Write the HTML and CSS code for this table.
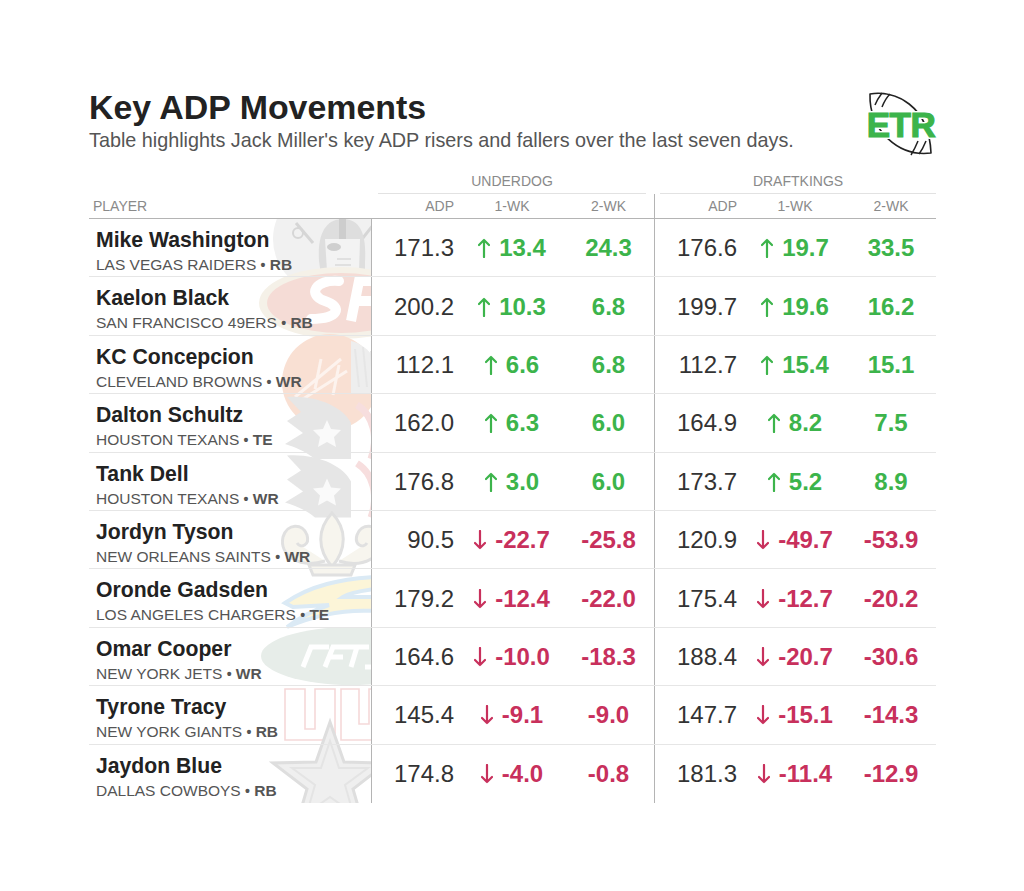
FILE: index.html
```html
<!DOCTYPE html>
<html lang="en">
<head>
<meta charset="utf-8">
<title>Key ADP Movements</title>
<link rel="stylesheet" href="styles.css">
</head>
<body>
<div class="page">
  <header class="head">
    <div class="head-text">
      <h1 class="title">Key ADP Movements</h1>
      <p class="sub">Table highlights Jack Miller's key ADP risers and fallers over the last seven days.</p>
    </div>
    <svg class="logo" viewBox="0 0 72 68" aria-label="ETR">
      <path d="M5 3 C 30 -1, 64 14, 66 62 C 34 66, 4 40, 5 3 Z" fill="none" stroke="#222" stroke-width="1.6" stroke-linejoin="round"/>
      <path d="M17 2 C 14 6, 12 9, 10 14" fill="none" stroke="#222" stroke-width="1.5"/>
      <path d="M25 3 C 21 7, 19 11, 17 16" fill="none" stroke="#222" stroke-width="1.5"/>
      <path d="M53 50 C 51 55, 49 59, 46 64" fill="none" stroke="#222" stroke-width="1.5"/>
      <path d="M61 50 C 59 55, 57 59, 54 63" fill="none" stroke="#222" stroke-width="1.5"/>
      <text x="36" y="46" text-anchor="middle" class="logo-halo">ETR</text>
      <text x="36" y="46" text-anchor="middle" class="logo-text">ETR</text>
    </svg>
  </header>

  <div class="table">
    <div class="groups">
      <div class="g-empty"></div>
      <div class="group ud">UNDERDOG</div>
      <div class="group dk">DRAFTKINGS</div>
    </div>
    <div class="cols">
      <div class="c-player">PLAYER</div>
      <div class="c-adp">ADP</div>
      <div class="c-wk">1-WK</div>
      <div class="c-wk2">2-WK</div>
      <div class="c-adp sep">ADP</div>
      <div class="c-wk">1-WK</div>
      <div class="c-wk2">2-WK</div>
    </div>

    <div class="body">
      <svg class="wm" viewBox="0 0 282 585" aria-hidden="true">
        <!-- Raiders -->
        <circle cx="238" cy="20" r="54" fill="#f1f1f1"/>
        <line x1="207" y1="4" x2="224" y2="24" stroke="#d6d6d6" stroke-width="3"/>
        <circle cx="209" cy="14" r="5" fill="none" stroke="#d6d6d6" stroke-width="2"/>
        <line x1="284" y1="6" x2="270" y2="24" stroke="#d6d6d6" stroke-width="3"/>
        <path d="M230 42 C 228 10, 240 0, 254 0 C 268 0, 278 10, 276 42 L 276 56 L 232 56 Z" fill="#dedede"/>
        <path d="M236 20 L 271 20 L 270 52 L 238 52 Z" fill="#f3f3f3"/>
        <rect x="250" y="0" width="7" height="20" fill="#cdcdcd"/>
        <ellipse cx="245" cy="28" rx="7" ry="4" fill="#cfcfcf"/>
        <path d="M248 40 L 262 40 M 246 46 L 262 46" stroke="#dadada" stroke-width="1.5"/>

        <!-- 49ers -->
        <ellipse cx="252" cy="84" rx="82" ry="36" fill="#f5f1e8"/>
        <ellipse cx="252" cy="84" rx="74" ry="30" fill="#f5dcd6"/>
        <path d="M250 62 C 226 60, 218 76, 236 82 C 254 88, 250 100, 222 100" fill="none" stroke="#ffffff" stroke-width="10" stroke-linecap="round"/>
        <path d="M262 102 L 270 62 L 292 62 M 266 82 L 288 82" fill="none" stroke="#ffffff" stroke-width="10"/>

        <!-- Browns -->
        <circle cx="241" cy="163" r="48" fill="#f9e0d3"/>
        <path d="M262 122 C 275 125, 285 135, 290 150 L 290 175 L 262 175 Z" fill="#eeeeee"/>
        <path d="M206 178 L 252 140 M 214 180 L 258 152 M 226 170 L 232 140 M 244 176 L 250 146" stroke="#fdf3ee" stroke-width="3" fill="none"/>
        <path d="M266 130 L 270 168 M 274 128 L 278 168 M 282 132 L 284 168" stroke="#e6e6e6" stroke-width="2"/>

        <!-- Texans 1 -->
        <g>
          <path d="M198 178 C 228 176, 254 188, 262 204 L 262 240 L 226 240 C 216 232, 206 228, 196 225 L 214 214 L 198 202 L 212 193 Z" fill="#e6e6e6"/>
          <path d="M238 201 L 242 210 L 252 211 L 245 218 L 247 228 L 238 223 L 229 228 L 231 218 L 224 211 L 234 210 Z" fill="#fafafa"/>
          <path d="M268 186 C 284 196, 290 218, 282 240" stroke="#f7dede" stroke-width="7" fill="none"/>
        </g>
        <!-- Texans 2 -->
        <g transform="translate(0 58.4)">
          <path d="M198 178 C 228 176, 254 188, 262 204 L 262 240 L 226 240 C 216 232, 206 228, 196 225 L 214 214 L 198 202 L 212 193 Z" fill="#e6e6e6"/>
          <path d="M238 201 L 242 210 L 252 211 L 245 218 L 247 228 L 238 223 L 229 228 L 231 218 L 224 211 L 234 210 Z" fill="#fafafa"/>
          <path d="M268 186 C 284 196, 290 218, 282 240" stroke="#f7dede" stroke-width="7" fill="none"/>
        </g>

        <!-- Saints -->
        <g fill="#f7f5ee" stroke="#e0e0e0" stroke-width="3">
          <path d="M243 294 C 228 310, 228 330, 243 348 C 258 330, 258 310, 243 294 Z"/>
          <path d="M236 342 C 210 350, 190 336, 194 318 C 198 304, 214 304, 218 316 C 221 326, 212 330, 208 324"/>
          <path d="M250 342 C 276 350, 296 336, 292 318 C 288 304, 272 304, 268 316 C 265 326, 274 330, 278 324"/>
          <path d="M220 346 L 266 346 L 262 356 L 224 356 Z"/>
        </g>

        <!-- Chargers -->
        <path d="M196 384 C 222 366, 252 360, 286 358 L 286 370 C 270 372, 260 374, 254 378 L 286 378 L 286 392 C 254 390, 226 396, 198 408 C 214 396, 228 390, 240 386 L 204 388 Z" fill="#fcf5d8" stroke="#dbeaf5" stroke-width="4"/>

        <!-- Jets -->
        <ellipse cx="262" cy="437" rx="90" ry="29" fill="#e7ede9"/>
        <path d="M214 448 L 222 428 L 240 428 M 236 448 L 244 428 L 258 428 M 240 438 L 254 438 M 262 448 L 268 428 M 256 428 L 280 428 M 276 448 L 290 448" fill="none" stroke="#ffffff" stroke-width="5"/>

        <!-- Giants -->
        <g fill="none" stroke="#f5d9d9" stroke-width="1.6">
          <path d="M196 521 V 470 H 216 V 510 H 226 V 470 H 246 V 521 Z"/>
          <path d="M252 470 H 270 V 505 H 280 V 470 H 300 V 521 H 252 Z"/>
        </g>

        <!-- Cowboys -->
        <path d="M241 503 L 255 543 L 298 544 L 264 570 L 276 611 L 241 587 L 206 611 L 218 570 L 184 544 L 227 543 Z" fill="#efefef" stroke="#dedede" stroke-width="3"/>
        <path d="M241 522 L 250 549 L 279 549 L 256 566 L 264 594 L 241 578 L 218 594 L 226 566 L 203 549 L 232 549 Z" fill="none" stroke="#e4e4e4" stroke-width="2"/>
      </svg>

      <div class="row">
        <div class="player"><div class="name">Mike Washington</div><div class="team">LAS VEGAS RAIDERS <span class="dot">•</span> <b>RB</b></div></div>
        <div class="adp sep">171.3</div>
        <div class="wk up"><svg class="arr" viewBox="0 0 12 20"><path d="M6 19 V2 M1 7 L6 2 L11 7"/></svg><span>13.4</span></div>
        <div class="wk2 up">24.3</div>
        <div class="adp sep">176.6</div>
        <div class="wk up"><svg class="arr" viewBox="0 0 12 20"><path d="M6 19 V2 M1 7 L6 2 L11 7"/></svg><span>19.7</span></div>
        <div class="wk2 up">33.5</div>
      </div>
      <div class="row">
        <div class="player"><div class="name">Kaelon Black</div><div class="team">SAN FRANCISCO 49ERS <span class="dot">•</span> <b>RB</b></div></div>
        <div class="adp sep">200.2</div>
        <div class="wk up"><svg class="arr" viewBox="0 0 12 20"><path d="M6 19 V2 M1 7 L6 2 L11 7"/></svg><span>10.3</span></div>
        <div class="wk2 up">6.8</div>
        <div class="adp sep">199.7</div>
        <div class="wk up"><svg class="arr" viewBox="0 0 12 20"><path d="M6 19 V2 M1 7 L6 2 L11 7"/></svg><span>19.6</span></div>
        <div class="wk2 up">16.2</div>
      </div>
      <div class="row">
        <div class="player"><div class="name">KC Concepcion</div><div class="team">CLEVELAND BROWNS <span class="dot">•</span> <b>WR</b></div></div>
        <div class="adp sep">112.1</div>
        <div class="wk up"><svg class="arr" viewBox="0 0 12 20"><path d="M6 19 V2 M1 7 L6 2 L11 7"/></svg><span>6.6</span></div>
        <div class="wk2 up">6.8</div>
        <div class="adp sep">112.7</div>
        <div class="wk up"><svg class="arr" viewBox="0 0 12 20"><path d="M6 19 V2 M1 7 L6 2 L11 7"/></svg><span>15.4</span></div>
        <div class="wk2 up">15.1</div>
      </div>
      <div class="row">
        <div class="player"><div class="name">Dalton Schultz</div><div class="team">HOUSTON TEXANS <span class="dot">•</span> <b>TE</b></div></div>
        <div class="adp sep">162.0</div>
        <div class="wk up"><svg class="arr" viewBox="0 0 12 20"><path d="M6 19 V2 M1 7 L6 2 L11 7"/></svg><span>6.3</span></div>
        <div class="wk2 up">6.0</div>
        <div class="adp sep">164.9</div>
        <div class="wk up"><svg class="arr" viewBox="0 0 12 20"><path d="M6 19 V2 M1 7 L6 2 L11 7"/></svg><span>8.2</span></div>
        <div class="wk2 up">7.5</div>
      </div>
      <div class="row">
        <div class="player"><div class="name">Tank Dell</div><div class="team">HOUSTON TEXANS <span class="dot">•</span> <b>WR</b></div></div>
        <div class="adp sep">176.8</div>
        <div class="wk up"><svg class="arr" viewBox="0 0 12 20"><path d="M6 19 V2 M1 7 L6 2 L11 7"/></svg><span>3.0</span></div>
        <div class="wk2 up">6.0</div>
        <div class="adp sep">173.7</div>
        <div class="wk up"><svg class="arr" viewBox="0 0 12 20"><path d="M6 19 V2 M1 7 L6 2 L11 7"/></svg><span>5.2</span></div>
        <div class="wk2 up">8.9</div>
      </div>
      <div class="row">
        <div class="player"><div class="name">Jordyn Tyson</div><div class="team">NEW ORLEANS SAINTS <span class="dot">•</span> <b>WR</b></div></div>
        <div class="adp sep">90.5</div>
        <div class="wk down"><svg class="arr" viewBox="0 0 12 20"><path d="M6 1 V18 M1 13 L6 18 L11 13"/></svg><span>-22.7</span></div>
        <div class="wk2 down">-25.8</div>
        <div class="adp sep">120.9</div>
        <div class="wk down"><svg class="arr" viewBox="0 0 12 20"><path d="M6 1 V18 M1 13 L6 18 L11 13"/></svg><span>-49.7</span></div>
        <div class="wk2 down">-53.9</div>
      </div>
      <div class="row">
        <div class="player"><div class="name">Oronde Gadsden</div><div class="team">LOS ANGELES CHARGERS <span class="dot">•</span> <b>TE</b></div></div>
        <div class="adp sep">179.2</div>
        <div class="wk down"><svg class="arr" viewBox="0 0 12 20"><path d="M6 1 V18 M1 13 L6 18 L11 13"/></svg><span>-12.4</span></div>
        <div class="wk2 down">-22.0</div>
        <div class="adp sep">175.4</div>
        <div class="wk down"><svg class="arr" viewBox="0 0 12 20"><path d="M6 1 V18 M1 13 L6 18 L11 13"/></svg><span>-12.7</span></div>
        <div class="wk2 down">-20.2</div>
      </div>
      <div class="row">
        <div class="player"><div class="name">Omar Cooper</div><div class="team">NEW YORK JETS <span class="dot">•</span> <b>WR</b></div></div>
        <div class="adp sep">164.6</div>
        <div class="wk down"><svg class="arr" viewBox="0 0 12 20"><path d="M6 1 V18 M1 13 L6 18 L11 13"/></svg><span>-10.0</span></div>
        <div class="wk2 down">-18.3</div>
        <div class="adp sep">188.4</div>
        <div class="wk down"><svg class="arr" viewBox="0 0 12 20"><path d="M6 1 V18 M1 13 L6 18 L11 13"/></svg><span>-20.7</span></div>
        <div class="wk2 down">-30.6</div>
      </div>
      <div class="row">
        <div class="player"><div class="name">Tyrone Tracy</div><div class="team">NEW YORK GIANTS <span class="dot">•</span> <b>RB</b></div></div>
        <div class="adp sep">145.4</div>
        <div class="wk down"><svg class="arr" viewBox="0 0 12 20"><path d="M6 1 V18 M1 13 L6 18 L11 13"/></svg><span>-9.1</span></div>
        <div class="wk2 down">-9.0</div>
        <div class="adp sep">147.7</div>
        <div class="wk down"><svg class="arr" viewBox="0 0 12 20"><path d="M6 1 V18 M1 13 L6 18 L11 13"/></svg><span>-15.1</span></div>
        <div class="wk2 down">-14.3</div>
      </div>
      <div class="row">
        <div class="player"><div class="name">Jaydon Blue</div><div class="team">DALLAS COWBOYS <span class="dot">•</span> <b>RB</b></div></div>
        <div class="adp sep">174.8</div>
        <div class="wk down"><svg class="arr" viewBox="0 0 12 20"><path d="M6 1 V18 M1 13 L6 18 L11 13"/></svg><span>-4.0</span></div>
        <div class="wk2 down">-0.8</div>
        <div class="adp sep">181.3</div>
        <div class="wk down"><svg class="arr" viewBox="0 0 12 20"><path d="M6 1 V18 M1 13 L6 18 L11 13"/></svg><span>-11.4</span></div>
        <div class="wk2 down">-12.9</div>
      </div>
    </div>
  </div>
</div>
</body>
</html>
```

FILE: styles.css
```css
* { box-sizing: border-box; }

body {
  margin: 0;
  background: #ffffff;
  font-family: "Liberation Sans", Arial, Helvetica, sans-serif;
  color: #222222;
}

.page {
  width: 847px;
  margin-left: 89px;
  padding-top: 88px;
}

.head {
  display: flex;
  justify-content: space-between;
  align-items: flex-start;
}

.title {
  margin: 0;
  font-size: 33.9px;
  line-height: 38px;
  font-weight: 700;
  color: #222222;
}

.sub {
  margin: 2px 0 0;
  font-size: 19.8px;
  line-height: 24px;
  color: #555555;
  white-space: nowrap;
}

.logo {
  width: 72px;
  height: 68px;
  margin-top: 3px;
  margin-bottom: -20px;
  margin-right: -1px;
}

.logo-halo,
.logo-text {
  font-family: "Liberation Sans", Arial, sans-serif;
  font-weight: 700;
  font-size: 35px;
  letter-spacing: -0.5px;
}

.logo-halo {
  fill: #ffffff;
  stroke: #ffffff;
  stroke-width: 4px;
}

.logo-text {
  fill: #3cb44b;
  stroke: #3cb44b;
  stroke-width: 1.2px;
}

.table {
  margin-top: 18px;
}

.groups,
.cols,
.row {
  display: grid;
  grid-template-columns: 282px 94px 94px 95px 94px 94px 94px;
}

.groups {
  height: 24px;
}

.group {
  grid-column: span 3;
  text-align: center;
  font-size: 14px;
  line-height: 23px;
  color: #8a8a8a;
  border-bottom: 1px solid #e2e2e2;
}

.group.ud { margin: 0 8px 0 7px; }
.group.dk { margin-left: 6px; }

.cols {
  height: 25px;
  border-bottom: 1px solid #b4b4b4;
  font-size: 14px;
  line-height: 24px;
  color: #8a8a8a;
}

.c-player { padding-left: 4px; }
.c-adp { text-align: right; padding-right: 11px; }
.c-wk { text-align: center; }
.c-wk2 { text-align: center; padding-left: 4px; }

.sep { border-left: 1px solid #b4b4b4; }

.body {
  position: relative;
}

.wm {
  position: absolute;
  left: 0;
  top: 0;
  width: 282px;
  height: 585px;
  overflow: hidden;
  z-index: 0;
}

.row {
  position: relative;
  z-index: 1;
  height: 58.4px;
  border-bottom: 1px solid #e6e6e6;
}

.row:last-child {
  border-bottom: none;
}

.player {
  padding: 9px 0 0 7px;
}

.name {
  font-size: 21.2px;
  line-height: 24px;
  font-weight: 700;
  color: #222222;
}

.team {
  margin-top: 4px;
  font-size: 15.5px;
  line-height: 18px;
  color: #555555;
  white-space: nowrap;
}

.team b {
  font-weight: 700;
  color: #555555;
}

.dot {
  font-size: 14px;
  font-weight: 700;
}

.adp,
.wk,
.wk2 {
  display: flex;
  align-items: center;
  font-size: 24px;
  line-height: 28px;
  padding-top: 1px;
}

.adp {
  justify-content: flex-end;
  padding-right: 11px;
  color: #333333;
}

.wk {
  justify-content: center;
  gap: 9px;
  font-weight: 700;
}

.wk2 {
  justify-content: center;
  padding-left: 4px;
  font-weight: 700;
}

.up { color: #3cb44b; }
.down { color: #c8305c; }

.arr {
  width: 12px;
  height: 20px;
  flex: none;
}

.arr path {
  fill: none;
  stroke: currentColor;
  stroke-width: 2.2;
  stroke-linecap: round;
  stroke-linejoin: round;
}
```
